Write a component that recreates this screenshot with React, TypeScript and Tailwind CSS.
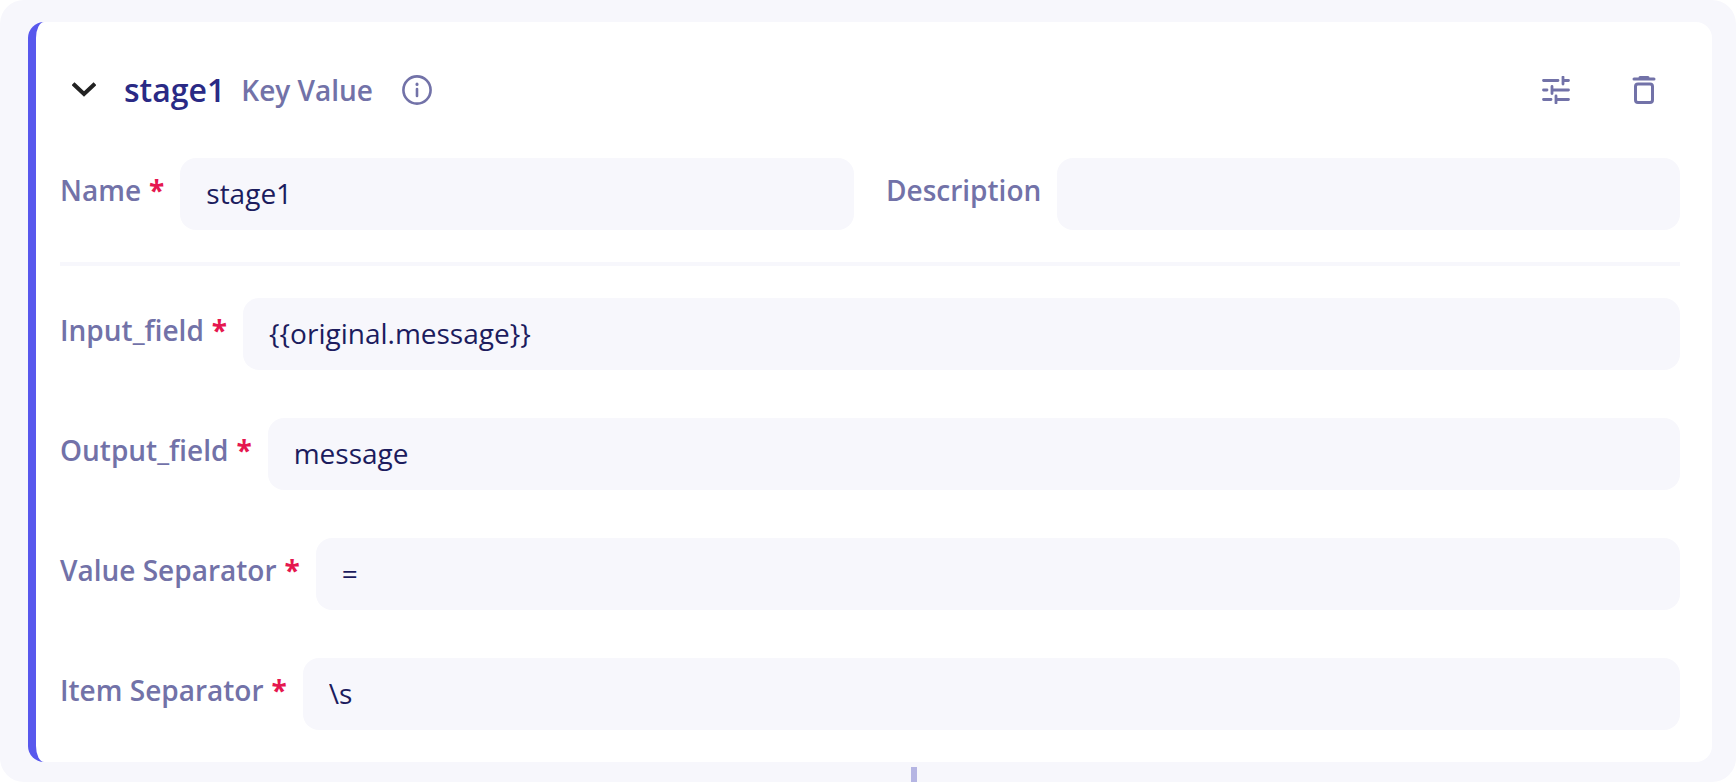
const font = { fontFamily: '"Open Sans", "Noto Sans", sans-serif' };

function Field({ label, value, required = true, className = "flex-1" }: { label: string; value?: string; required?: boolean; className?: string }) {
  return (
    <div className={`flex items-center min-w-0 ${className}`}>
      <label className="shrink-0 whitespace-nowrap text-[28px] leading-[38px] font-semibold text-[#7272a8] pb-[8px]">
        {label}
        {required && <span className="text-[#e5174f] font-bold ml-[8px]">*</span>}
      </label>
      <input
        readOnly
        defaultValue={value}
        className="ml-4 flex-1 min-w-0 h-[72px] rounded-2xl bg-[#f7f7fc] pl-[26px] pr-4 pb-[2px] text-[28px] text-[#1c1c5e] outline-none"
      />
    </div>
  );
}

export default function App() {
  return (
    <div className="bg-white h-[782px] overflow-hidden" style={font}>
      <div className="relative h-full rounded-3xl bg-[#f7f7fc] px-[24px] pt-[22px] pb-[20px] pl-[28px]">
        <div className="h-[740px] rounded-2xl border-l-[8px] border-[#5858ed] bg-white pl-[24px] pr-[32px]">
          <div className="flex items-center h-[136px]">
            <svg width="24" height="16" viewBox="0 0 24 16" className="ml-[12px] shrink-0" fill="none" stroke="#222222" strokeWidth="4" strokeLinecap="square">
              <path d="M2.5 3 L12 12 L21.5 3" />
            </svg>
            <span className="ml-[28px] text-[32px] font-semibold text-[#2a2a85]">stage1</span>
            <span className="ml-[16px] text-[28px] font-semibold text-[#7272a8]">Key Value</span>
            <svg width="30" height="30" viewBox="0 0 30 30" className="ml-[29px]" fill="none" stroke="#7272a8" strokeWidth="2.6" strokeLinecap="round">
              <circle cx="15" cy="15" r="13.6" />
              <path d="M15 14 V21" strokeWidth="2.6" />
              <path d="M15 9 V9.4" strokeWidth="3" />
            </svg>
            <div className="ml-auto flex items-center">
              <svg width="28" height="28" viewBox="0 0 28 28" fill="none" stroke="#7272a8" strokeWidth="2.8" strokeLinecap="round">
                <path d="M1.5 4.5 H16 M23 4.5 H26.5 M21 1 V8 M1.5 14 H5 M12 14 H26.5 M10 10.5 V17.5 M1.5 23.5 H9 M16 23.5 H26.5 M14 20 V27" />
              </svg>
              <svg width="24" height="28" viewBox="0 0 24 28" className="ml-[62px] mr-[24px]" fill="none" stroke="#7272a8" strokeWidth="3" strokeLinecap="round" strokeLinejoin="round">
                <path d="M2 3 H22 M8 1.5 H16" />
                <rect x="3.5" y="8" width="17" height="18.5" rx="2.5" />
              </svg>
            </div>
          </div>
          <div className="flex gap-8">
            <Field label="Name" value="stage1" className="w-[794px] shrink-0" />
            <Field label="Description" required={false} className="flex-1" />
          </div>
          <div className="h-1 bg-[#f7f7fc] mt-8 mb-8" />
          <div className="flex flex-col gap-12">
            <Field label="Input_field" value="{{original.message}}" />
            <Field label="Output_field" value="message" />
            <Field label="Value Separator" value="=" />
            <Field label="Item Separator" value="\s" />
          </div>
        </div>
        <div className="absolute left-[911px] top-[767px] h-[15px] w-[6px] bg-[#b5b5e3]" />
      </div>
    </div>
  );
}
